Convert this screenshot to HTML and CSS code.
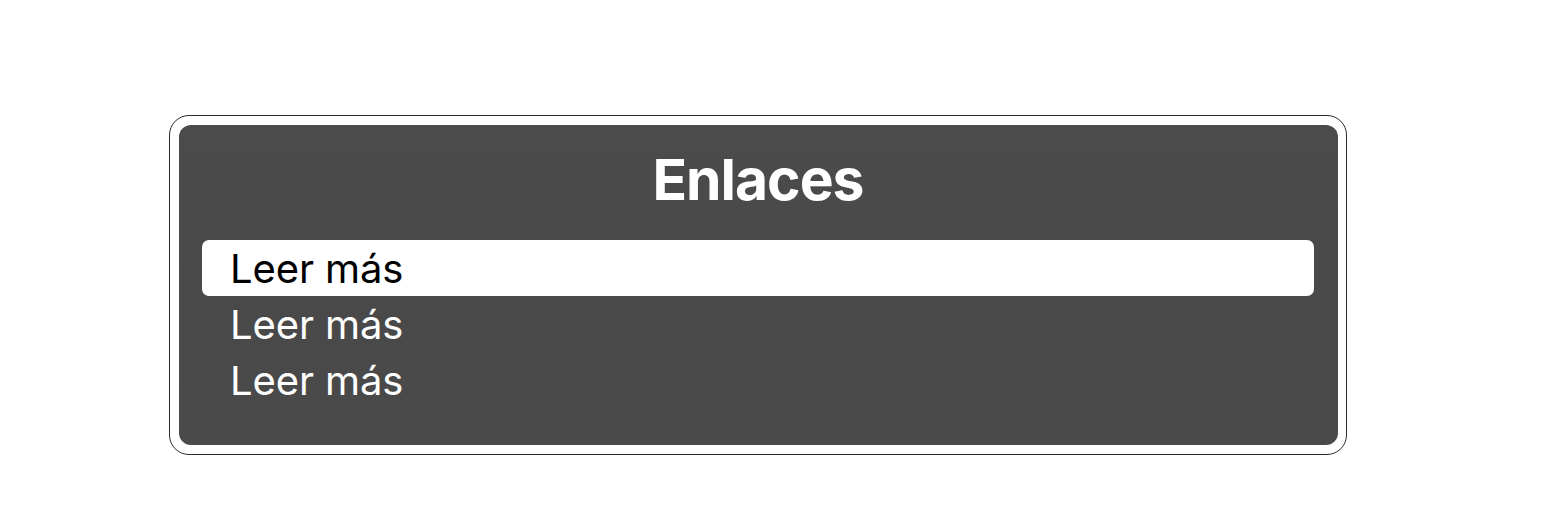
FILE: index.html
```html
<!DOCTYPE html>
<html lang="es">
<head>
<meta charset="utf-8">
<title>Enlaces</title>
<link rel="stylesheet" href="styles.css">
</head>
<body>
  <div class="stage">
    <section class="rotor">
      <div class="rotor-panel">
        <h1 class="rotor-title">Enlaces</h1>
        <ul class="rotor-list">
          <li class="rotor-item is-selected">Leer más</li>
          <li class="rotor-item">Leer más</li>
          <li class="rotor-item">Leer más</li>
        </ul>
      </div>
    </section>
  </div>
</body>
</html>
```
FILE: styles.css
```css
html, body {
  margin: 0;
  padding: 0;
  background: #ffffff;
}

body {
  font-family: Inter, "Noto Sans", "Liberation Sans", sans-serif;
}

.stage {
  padding: 115px 0 0 169px;
}

.rotor {
  box-sizing: border-box;
  width: 1178px;
  height: 340px;
  padding: 9px 8px 9px 9px;
  background: #ffffff;
  border: 1px solid #2a2a2a;
  border-radius: 20px;
}

.rotor-panel {
  box-sizing: border-box;
  height: 100%;
  padding: 0 24px 0 23px;
  background: linear-gradient(180deg, #4b4b4b 0%, #494949 60%, #4a4a4a 100%);
  border-radius: 12px;
  display: flex;
  flex-direction: column;
}

.rotor-title {
  margin: 0;
  height: 115px;
  display: flex;
  align-items: center;
  justify-content: center;
  padding: 0 0 6px 0;
  box-sizing: border-box;
  color: #ffffff;
  font-size: 57px;
  font-weight: 700;
  letter-spacing: -1px;
}

.rotor-list {
  list-style: none;
  margin: 0;
  padding: 0;
  display: flex;
  flex-direction: column;
}

.rotor-item {
  height: 56px;
  box-sizing: border-box;
  padding: 0 0 0 28px;
  display: flex;
  align-items: center;
  color: #ffffff;
  font-size: 40px;
  font-weight: 400;
  letter-spacing: -0.1px;
  border-radius: 7px;
}

.rotor-item.is-selected {
  background: #ffffff;
  color: #000000;
}
```
